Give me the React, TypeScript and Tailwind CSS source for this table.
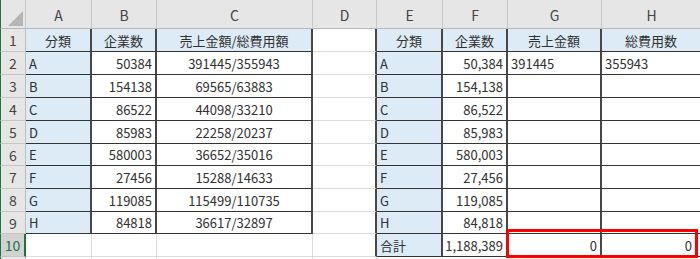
import { Fragment } from 'react'

type Cell = { t?: string; a?: 'l' | 'r' | 'c'; blue?: boolean; tbl?: boolean; dr?: boolean; pr?: boolean }

const colLetters = ['A', 'B', 'C', 'D', 'E', 'F', 'G', 'H']

const left: [string, string, string][] = [
    ['A', '50384', '391445/355943'],
    ['B', '154138', '69565/63883'],
    ['C', '86522', '44098/33210'],
    ['D', '85983', '22258/20237'],
    ['E', '580003', '36652/35016'],
    ['F', '27456', '15288/14633'],
    ['G', '119085', '115499/110735'],
    ['H', '84818', '36617/32897'],
]

const fmt = (s: string) => Number(s).toLocaleString('en-US')

function buildRows(): Cell[][] {
    const rows: Cell[][] = []
    rows.push([
        { t: '分類', a: 'c', blue: true, tbl: true },
        { t: '企業数', a: 'c', blue: true, tbl: true },
        { t: '売上金額/総費用額', a: 'c', blue: true, tbl: true },
        { dr: true },
        { t: '分類', a: 'c', blue: true, tbl: true },
        { t: '企業数', a: 'c', blue: true, tbl: true },
        { t: '売上金額', a: 'c', blue: true, tbl: true },
        { t: '総費用数', a: 'c', blue: true, tbl: true },
    ])
    left.forEach(([k, n, c], i) => {
        rows.push([
            { t: k, a: 'l', blue: true, tbl: true },
            { t: n, a: 'r', tbl: true },
            { t: c, a: 'c', tbl: true },
            { dr: true },
            { t: k, a: 'l', blue: true, tbl: true },
            { t: fmt(n), a: 'r', tbl: true },
            { t: i === 0 ? '391445' : '', a: 'l', tbl: true },
            { t: i === 0 ? '355943' : '', a: 'l', tbl: true },
        ])
    })
    rows.push([
        {},
        {},
        {},
        { dr: true },
        { t: '合計', a: 'l', blue: true, tbl: true },
        { t: '1,188,389', a: 'r', tbl: true },
        { t: '0', a: 'r', tbl: true },
        { t: '0', a: 'r', tbl: true, pr: true },
    ])
    return rows
}

function GridCell({ c }: { c: Cell }) {
    const align = c.a === 'r' ? 'justify-end' : c.a === 'c' ? 'justify-center' : 'justify-start'
    const bg = c.blue ? 'bg-[#ddebf7]' : 'bg-white'
    const border = c.tbl
        ? 'border-r-2 border-b border-r-[#474747] border-b-[#333333]'
        : c.dr
            ? 'border-r-2 border-b border-r-[#474747] border-b-[#dcdcdc]'
            : 'border-r border-b border-[#dcdcdc]'
    return (
        <div className={`flex items-center overflow-hidden whitespace-nowrap pl-[3px] pt-[1px] text-[13px] text-[#303030] ${c.pr ? 'pr-[8px]' : 'pr-[3px]'} ${align} ${bg} ${border}`}>
            {c.t}
        </div>
    )
}

export default function App() {
    const rows = buildRows()
    return (
        <div className="relative w-[700px] h-[259px] overflow-hidden bg-white font-['Noto_Sans_CJK_JP',sans-serif]">
            <div className="grid grid-cols-[26px_66px_65px_156px_64px_66px_65px_94px_100px] grid-rows-[29px_23px_23px_23px_23px_23px_22px_23px_23px_22px_23px_4px]">
                {/* corner */}
                <div className="relative bg-[#e6e6e6] border-l border-l-[#217346] border-r border-b border-r-[#c9c9c9] border-b-[#b8b8b8]">
                    <svg className="absolute right-[2px] bottom-[2px]" width="15" height="15" viewBox="0 0 15 15">
                        <polygon points="15,0 15,15 0,15" fill="#b5b5b5" />
                    </svg>
                </div>
                {colLetters.map((l) => (
                    <div key={l} className="flex items-center justify-center pt-[2px] bg-[#e6e6e6] border-r border-b border-r-[#c9c9c9] border-b-[#b8b8b8] text-[14px] text-[#444]">
                        {l}
                    </div>
                ))}

                {rows.map((r, i) => (
                    <Fragment key={i}>
                        <div
                            className={`flex items-center justify-center pt-[1px] border-l border-l-[#217346] border-b border-b-[#c6c6c6] text-[14px] ${
                                i === 9
                                    ? 'bg-[#d2d2d2] text-[#217346] border-r-2 border-r-[#217346]'
                                    : 'bg-[#e6e6e6] text-[#444] border-r border-r-[#bdbdbd]'
                            }`}
                        >
                            {i + 1}
                        </div>
                        {r.map((c, j) => (
                            <GridCell key={j} c={c} />
                        ))}
                    </Fragment>
                ))}

                {/* row 11 sliver */}
                <div className="bg-[#e6e6e6] border-l border-l-[#217346] border-r border-r-[#bdbdbd]" />
                {colLetters.map((l) => (
                    <div key={`r11${l}`} className="bg-white border-r border-r-[#dcdcdc]" />
                ))}
            </div>

            <div className="absolute left-[506px] top-[229px] w-[192px] h-[29px] border-[3px] border-[#ff0000]" />
        </div>
    )
}
